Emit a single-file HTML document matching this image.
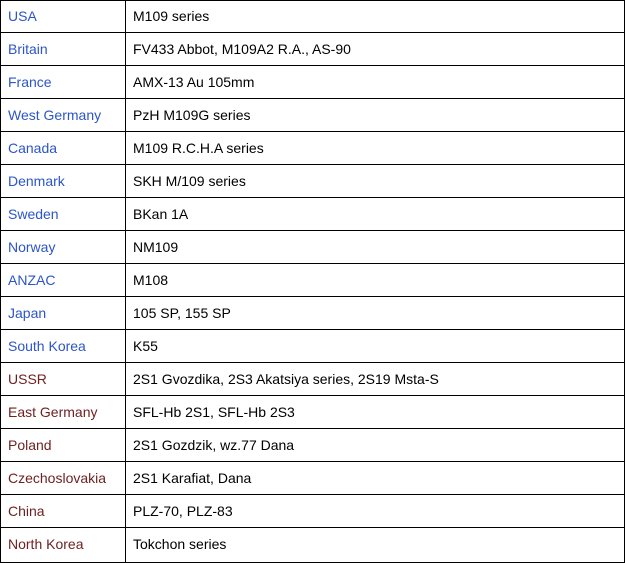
<!DOCTYPE html>
<html><head><meta charset="utf-8"><style>
html,body{margin:0;padding:0;background:#fff;width:625px;height:563px;overflow:hidden}
.t{position:absolute;left:0;top:0;width:623px;height:561px;border:1px solid #000}
.w{position:absolute;left:0;top:-1px;width:623px;height:562px}
.r{position:absolute;left:0;width:623px;height:32px;border-bottom:1px solid #000;font-family:"Liberation Sans",Arial,sans-serif;font-size:14px}
.a{position:absolute;left:7px;top:8px;color:#2c55c8;white-space:nowrap}
.a.m{color:#6e1f1f}
.b{position:absolute;left:132px;top:8px;color:#000;white-space:nowrap}
.v{position:absolute;left:124px;top:0;width:1px;height:562px;background:#000}
</style></head><body>
<div class="t"><div class="w">
<div class="r" style="top:1px;height:31px"><span class="a" style="top:7px">USA</span><span class="b" style="top:7px">M109 series</span></div>
<div class="r" style="top:33px"><span class="a">Britain</span><span class="b">FV433 Abbot, M109A2 R.A., AS-90</span></div>
<div class="r" style="top:66px"><span class="a">France</span><span class="b">AMX-13 Au 105mm</span></div>
<div class="r" style="top:99px"><span class="a">West Germany</span><span class="b">PzH M109G series</span></div>
<div class="r" style="top:132px"><span class="a">Canada</span><span class="b">M109 R.C.H.A series</span></div>
<div class="r" style="top:165px"><span class="a">Denmark</span><span class="b">SKH M/109 series</span></div>
<div class="r" style="top:198px"><span class="a">Sweden</span><span class="b">BKan 1A</span></div>
<div class="r" style="top:231px"><span class="a">Norway</span><span class="b">NM109</span></div>
<div class="r" style="top:264px"><span class="a">ANZAC</span><span class="b">M108</span></div>
<div class="r" style="top:297px"><span class="a">Japan</span><span class="b">105 SP, 155 SP</span></div>
<div class="r" style="top:330px"><span class="a">South Korea</span><span class="b">K55</span></div>
<div class="r" style="top:363px"><span class="a m">USSR</span><span class="b">2S1 Gvozdika, 2S3 Akatsiya series, 2S19 Msta-S</span></div>
<div class="r" style="top:396px"><span class="a m">East Germany</span><span class="b">SFL-Hb 2S1, SFL-Hb 2S3</span></div>
<div class="r" style="top:429px"><span class="a m">Poland</span><span class="b">2S1 Gozdzik, wz.77 Dana</span></div>
<div class="r" style="top:462px"><span class="a m">Czechoslovakia</span><span class="b">2S1 Karafiat, Dana</span></div>
<div class="r" style="top:495px"><span class="a m">China</span><span class="b">PLZ-70, PLZ-83</span></div>
<div class="r" style="top:528px;border-bottom:none"><span class="a m">North Korea</span><span class="b">Tokchon series</span></div>
</div>
<div class="v"></div>
</div>
</body></html>
